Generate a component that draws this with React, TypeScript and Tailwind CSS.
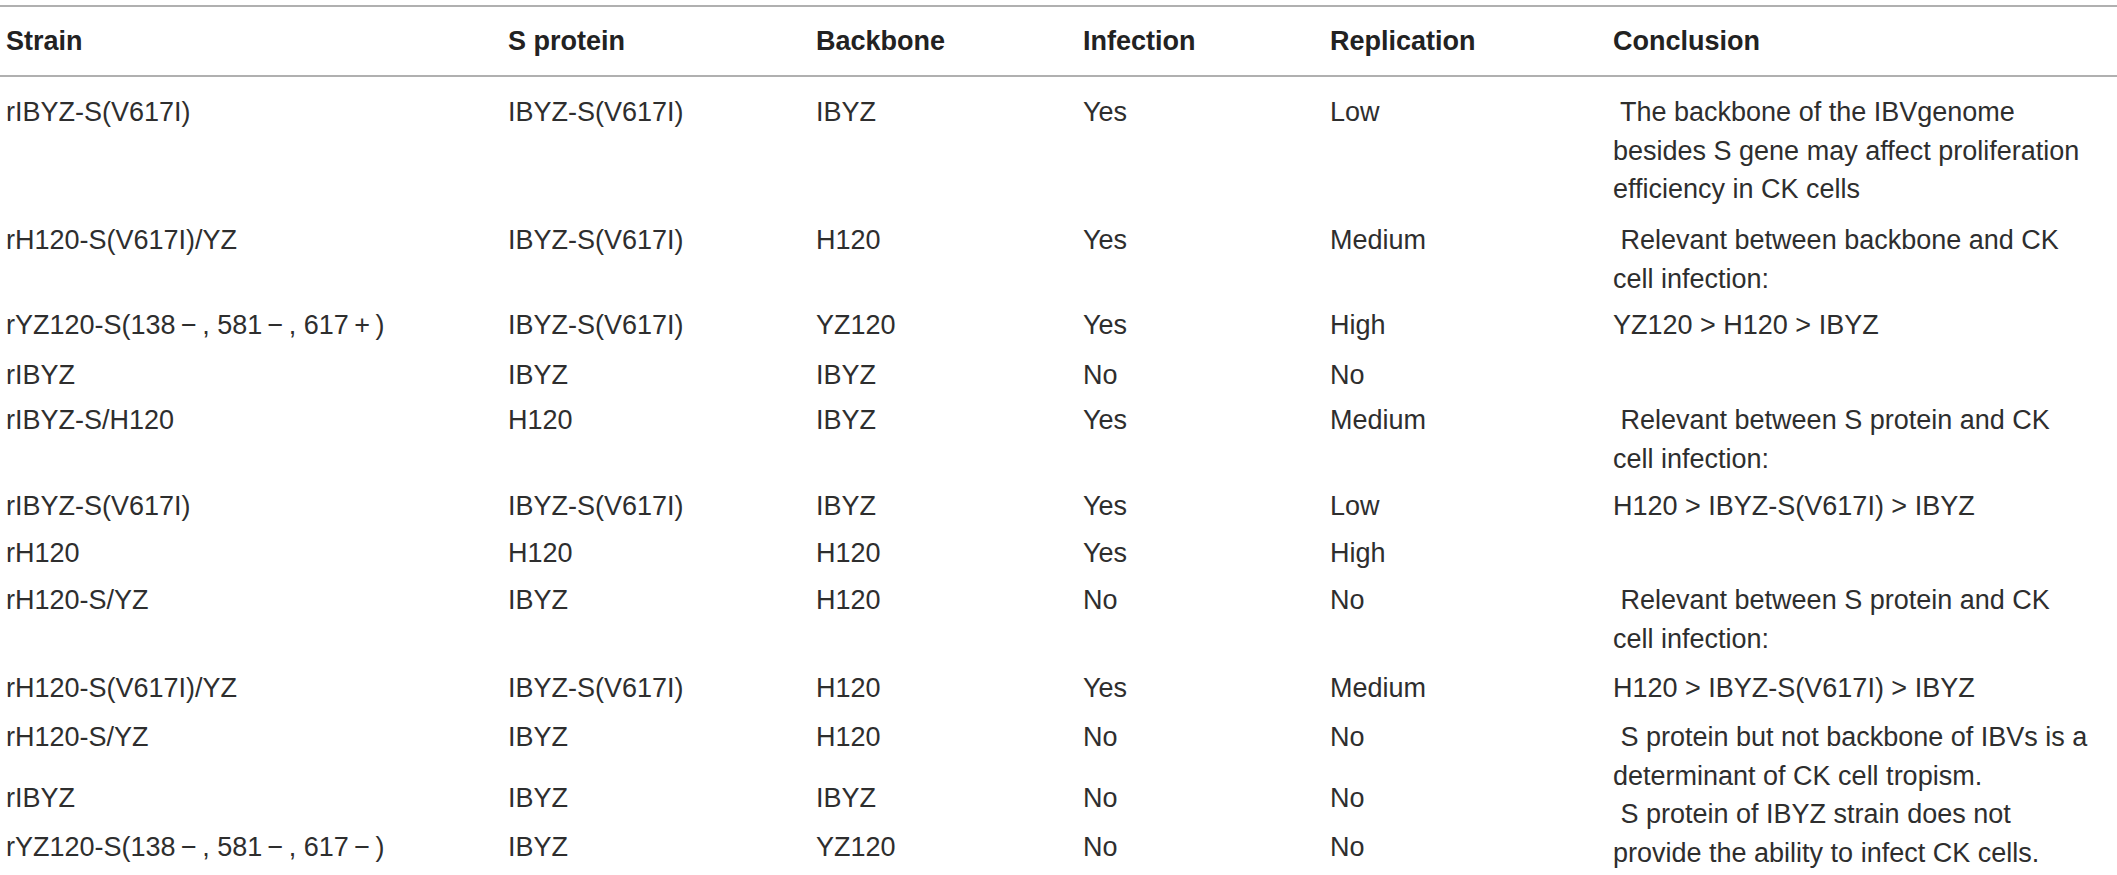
type Row = {
  strain: string;
  sProtein: string;
  backbone: string;
  infection: string;
  replication: string;
  conclusion?: string[];
  span?: boolean;
  blank?: boolean;
};

// thin spaces around the math signs, the source sets them wide
const rows: Row[] = [
  {
    strain: "rIBYZ-S(V617I)",
    sProtein: "IBYZ-S(V617I)",
    backbone: "IBYZ",
    infection: "Yes",
    replication: "Low",
    conclusion: [" The backbone of the IBVgenome", "besides S gene may affect proliferation", "efficiency in CK cells"],
  },
  {
    strain: "rH120-S(V617I)/YZ",
    sProtein: "IBYZ-S(V617I)",
    backbone: "H120",
    infection: "Yes",
    replication: "Medium",
    conclusion: [" Relevant between backbone and CK", "cell infection:"],
  },
  {
    strain: "rYZ120-S(138\u2009\u2212\u2009, 581\u2009\u2212\u2009, 617\u2009+\u2009)",
    sProtein: "IBYZ-S(V617I)",
    backbone: "YZ120",
    infection: "Yes",
    replication: "High",
    conclusion: ["YZ120 > H120 > IBYZ"],
  },
  { strain: "rIBYZ", sProtein: "IBYZ", backbone: "IBYZ", infection: "No", replication: "No", blank: true },
  {
    strain: "rIBYZ-S/H120",
    sProtein: "H120",
    backbone: "IBYZ",
    infection: "Yes",
    replication: "Medium",
    conclusion: [" Relevant between S protein and CK", "cell infection:"],
  },
  {
    strain: "rIBYZ-S(V617I)",
    sProtein: "IBYZ-S(V617I)",
    backbone: "IBYZ",
    infection: "Yes",
    replication: "Low",
    conclusion: ["H120 > IBYZ-S(V617I) > IBYZ"],
  },
  { strain: "rH120", sProtein: "H120", backbone: "H120", infection: "Yes", replication: "High", blank: true },
  {
    strain: "rH120-S/YZ",
    sProtein: "IBYZ",
    backbone: "H120",
    infection: "No",
    replication: "No",
    conclusion: [" Relevant between S protein and CK", "cell infection:"],
  },
  {
    strain: "rH120-S(V617I)/YZ",
    sProtein: "IBYZ-S(V617I)",
    backbone: "H120",
    infection: "Yes",
    replication: "Medium",
    conclusion: ["H120 > IBYZ-S(V617I) > IBYZ"],
  },
  {
    strain: "rH120-S/YZ",
    sProtein: "IBYZ",
    backbone: "H120",
    infection: "No",
    replication: "No",
    conclusion: [
      " S protein but not backbone of IBVs is a",
      "determinant of CK cell tropism.",
      " S protein of IBYZ strain does not",
      "provide the ability to infect CK cells.",
    ],
    span: true,
  },
  { strain: "rIBYZ", sProtein: "IBYZ", backbone: "IBYZ", infection: "No", replication: "No" },
  {
    strain: "rYZ120-S(138\u2009\u2212\u2009, 581\u2009\u2212\u2009, 617\u2009\u2212\u2009)",
    sProtein: "IBYZ",
    backbone: "YZ120",
    infection: "No",
    replication: "No",
  },
];

const headers = ["Strain", "S protein", "Backbone", "Infection", "Replication", "Conclusion"];

export default function App() {
  return (
    <div className="w-[2117px] h-[875px] overflow-hidden bg-white pt-[5px] font-['Liberation_Sans',Arial,sans-serif] text-[27px] text-[#2e2e2e]">
      <div className="grid h-[72px] grid-cols-[502px_308px_267px_247px_283px_1fr] items-center border-y-2 border-[#b0b0b0] pl-[6px] font-bold text-[#222]">
        {headers.map((h) => (
          <div key={h} className="leading-[38px]">
            {h}
          </div>
        ))}
      </div>

      <div className="grid grid-cols-[502px_308px_267px_247px_283px_1fr] grid-rows-[128px_85px_50px_45px_86px_47px_47px_88px_49px_61px_49px_52px] pl-[6px] pt-[11px] leading-[38.5px]">
        {rows.map((r, i) => (
          <>
            <div key={`s${i}`} className="pt-[5px]">{r.strain}</div>
            <div key={`p${i}`} className="pt-[5px]">{r.sProtein}</div>
            <div key={`b${i}`} className="pt-[5px]">{r.backbone}</div>
            <div key={`i${i}`} className="pt-[5px]">{r.infection}</div>
            <div key={`r${i}`} className="pt-[5px]">{r.replication}</div>
            {r.conclusion && (
              <div key={`c${i}`} className={r.span ? "row-span-3 whitespace-pre pt-[5px]" : "whitespace-pre pt-[5px]"}>
                {r.conclusion.map((line, j) => (
                  <div key={j}>{line}</div>
                ))}
              </div>
            )}
            {r.blank && <div key={`e${i}`} />}
          </>
        ))}
      </div>
    </div>
  );
}
